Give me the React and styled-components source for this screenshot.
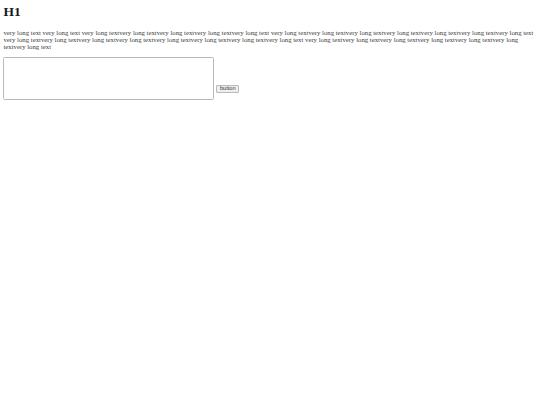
import React from 'react';
import styled, { createGlobalStyle } from 'styled-components';

const GlobalStyle = createGlobalStyle`
    html, body {
        background-color: #ffffff;
    }
    body {
        margin: 3.4px;
        font-family: "Liberation Serif", "Times New Roman", serif;
        font-size: 6.75px;
        color: #111111;
    }
`

const Page = styled.div`
    display: flex;
    flex-direction: column;
`
const Title = styled.h1`
    font-size: 13.5px;
    font-weight: bold;
    line-height: normal;
    margin: 0.5px 0 9px 0;
    color: #1a1a1a;
`
const Text = styled.p`
    margin: 0 0 7.6px 0;
    line-height: normal;
    color: #3c3c3c;
`
const InputRow = styled.div`
    display: flex;
    align-items: flex-end;
    gap: 2px;
`
const TextBox = styled.textarea`
    box-sizing: border-box;
    width: 211px;
    height: 42.5px;
    margin: 0;
    padding: 1px;
    border: 1px solid #b9b9b9;
    border-radius: 1.5px;
    resize: none;
    font-family: "Liberation Mono", monospace;
    font-size: 5.6px;
    outline: none;
`
const Button = styled.button`
    box-sizing: border-box;
    height: 8px;
    margin: 0 0 7px 0;
    padding: 0 2.6px;
    border: 1px solid #b9b9b9;
    border-radius: 1px;
    background-color: #efefef;
    font-family: "Liberation Sans", Arial, sans-serif;
    font-size: 5.6px;
    line-height: 1;
    color: #333333;
    display: flex;
    align-items: center;
`

const unit = "very long text"

const paragraph = [
    unit,
    unit,
    unit.repeat(5),
    unit.repeat(7),
    unit.repeat(8),
    unit.repeat(7),
].join(" ")

const App = () => {
  return (
    <Page>
        <GlobalStyle />
        <Title>H1</Title>
        <Text>{paragraph}</Text>
        <InputRow>
            <TextBox />
            <Button>button</Button>
        </InputRow>
    </Page>
  )
}

export default App
